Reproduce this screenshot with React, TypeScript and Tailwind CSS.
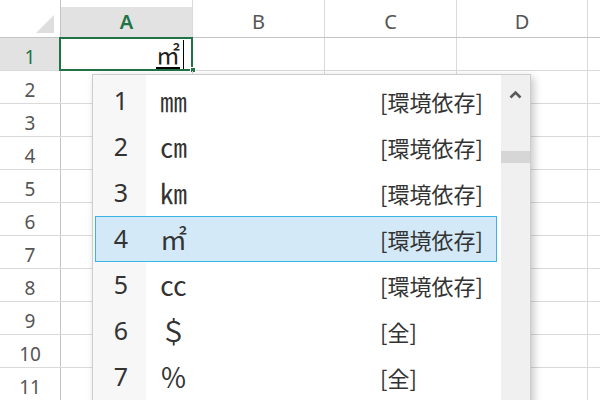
import React from 'react'

const cols = [
  { label: 'A', w: 'w-[132px]' },
  { label: 'B', w: 'w-[132px]' },
  { label: 'C', w: 'w-[132px]' },
  { label: 'D', w: 'w-[131px]' },
  { label: '', w: 'w-[40px]' },
]

const rows = [1, 2, 3, 4, 5, 6, 7, 8, 9, 10, 11]

const candidates = [
  { n: 1, text: '㎜', note: '[環境依存]' },
  { n: 2, text: '㎝', note: '[環境依存]' },
  { n: 3, text: '㎞', note: '[環境依存]' },
  { n: 4, text: '㎡', note: '[環境依存]', selected: true },
  { n: 5, text: '㏄', note: '[環境依存]' },
  { n: 6, text: '＄', note: '[全]' },
  { n: 7, text: '％', note: '[全]' },
]

const uiFont = "font-['Noto_Sans','Open_Sans',sans-serif]"
const cjkFont = "font-['Noto_Sans_CJK_JP','Noto_Sans',sans-serif]"

function HeaderRow() {
  return (
    <div className="flex h-[38px] border-b border-[#c4c4c4]">
      <div className="w-[61px] shrink-0 border-r border-[#c4c4c4] flex items-start justify-end pt-[15px] pr-[6px]">
        <svg width="18" height="18" viewBox="0 0 18 18">
          <polygon points="18,0 18,18 0,18" fill="#dedede" />
        </svg>
      </div>
      {cols.map((c) => (
        <div key={c.label} className={`${c.w} shrink-0 border-r border-[#dadada] flex flex-col`}>
          <div className="h-[7px] bg-white" />
          <div
            className={`flex-1 flex items-center justify-center text-[20px] ${uiFont} ${
              c.label === 'A' ? 'bg-[#e2e2e2] text-[#217346] font-semibold' : 'text-[#555]'
            }`}
          >
            {c.label}
          </div>
        </div>
      ))}
    </div>
  )
}

function Row({ n }: { n: number }) {
  const active = n === 1
  return (
    <div className="flex h-[33px] border-b border-[#dadada]">
      <div
        className={`w-[61px] shrink-0 border-r border-[#c4c4c4] flex items-center justify-center pt-[6px] text-[19px] ${uiFont} ${
          active ? 'bg-[#e2e2e2] text-[#217346]' : 'text-[#555]'
        }`}
      >
        {n}
      </div>
      {cols.map((c, i) => (
        <div key={c.label} className={`${c.w} shrink-0 border-r border-[#dadada] relative`}>
          {active && i === 0 && (
            <>
              <div className="h-full flex items-end justify-end pr-[8px] pb-[1px]">
                <span className={`${cjkFont} text-[24px] leading-[26px] text-[#222] border-b-2 border-black`}>㎡</span>
                <span className="w-[1px] h-[29px] bg-black ml-[3px]" />
              </div>
              <div className="absolute -left-[2px] -top-[1px] -right-[1px] -bottom-[1px] border-2 border-[#217346]" />
              <div className="absolute -right-[4px] -bottom-[3px] w-[6px] h-[6px] bg-[#217346] border border-white" />
            </>
          )}
        </div>
      ))}
    </div>
  )
}

function CandidateWindow() {
  return (
    <div className="absolute left-[92px] top-[74px] w-[439px] h-[340px] bg-white border border-[#cdcdcd] shadow-[3px_3px_8px_rgba(0,0,0,0.22)] flex">
      <div className="flex-1 pt-[3px] bg-[linear-gradient(to_right,#f7f7f7_53px,white_53px)]">
        {candidates.map((c) => (
          <div
            key={c.n}
            className={`ml-[2px] mr-[4px] h-[46px] flex items-center border ${
              c.selected ? 'bg-[#d3e9f7] border-[#3cb3e6]' : 'border-transparent'
            }`}
          >
            <div className={`w-[50px] text-center text-[25px] text-[#333] ${uiFont}`}>{c.n}</div>
            <div className={`w-[234px] pl-[14px] text-[27px] text-[#333] ${cjkFont}`}>{c.text}</div>
            <div className={`text-[22px] text-[#333] ${cjkFont}`}>{c.note}</div>
          </div>
        ))}
      </div>
      <div className="w-[29px] bg-[#f0f0f0] flex flex-col items-center">
        <div className="h-[38px] flex items-center justify-center">
          <svg width="13" height="9" viewBox="0 0 13 9">
            <polyline points="1.5,7.5 6.5,2.5 11.5,7.5" fill="none" stroke="#5a5a5a" strokeWidth="2.6" />
          </svg>
        </div>
        <div className="mt-[38px] w-full h-[12px] bg-[#d6d6d6]" />
      </div>
    </div>
  )
}

export default function App() {
  return (
    <div className="relative w-[600px] h-[400px] overflow-hidden bg-white">
      <HeaderRow />
      {rows.map((n) => (
        <Row key={n} n={n} />
      ))}
      <CandidateWindow />
    </div>
  )
}
